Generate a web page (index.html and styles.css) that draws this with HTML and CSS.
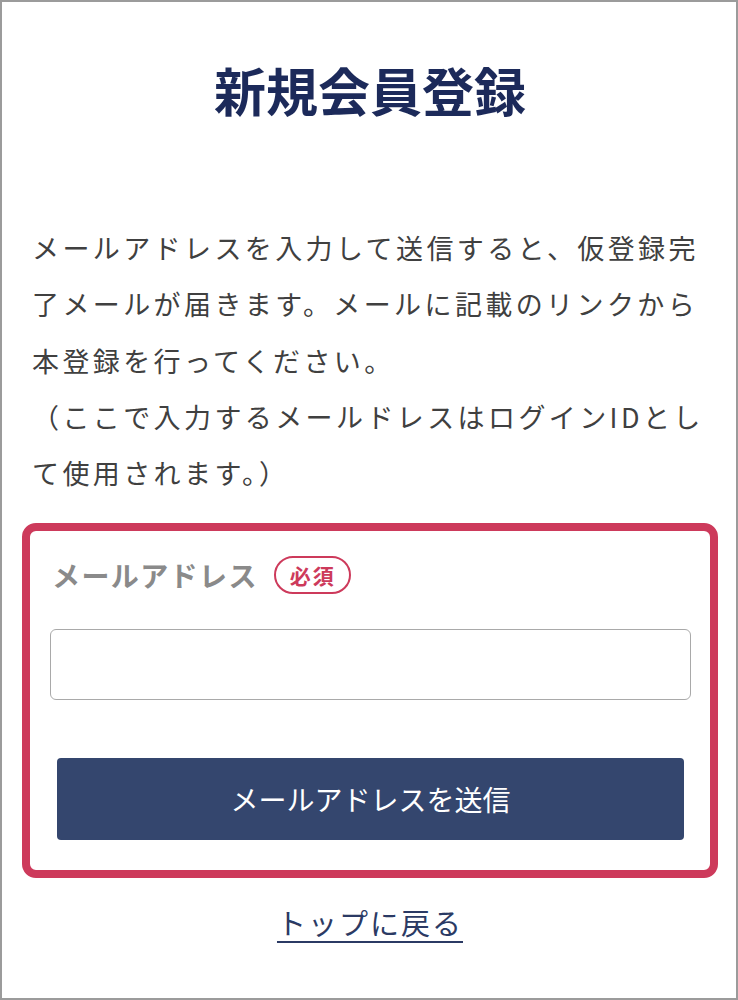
FILE: index.html
```html
<!DOCTYPE html>
<html lang="ja">
<head>
<meta charset="utf-8">
<title>新規会員登録</title>
<link rel="stylesheet" href="styles.css">
</head>
<body>
<div class="page">
  <h1 class="title">新規会員登録</h1>
  <p class="lead">メールアドレスを入力して送信すると、仮登録完了メールが届きます。メールに記載のリンクから本登録を行ってください。<br>（ここで入力するメールドレスはログインIDとして使用されます。）</p>
  <form class="box">
    <div class="label-row">
      <span class="label">メールアドレス</span>
      <span class="badge">必須</span>
    </div>
    <input class="input" type="email">
    <button class="submit" type="button">メールアドレスを送信</button>
  </form>
  <div class="back"><a href="#" class="back-link">トップに戻る</a></div>
</div>
</body>
</html>
```
FILE: styles.css
```css
html, body {
  margin: 0;
  padding: 0;
  background: #fff;
}
.page {
  box-sizing: border-box;
  width: 738px;
  height: 1000px;
  border: 2px solid #9b9b9b;
  font-family: "Noto Sans CJK JP", "Noto Sans", sans-serif;
  padding: 0 18px 0 20px;
}
.title {
  margin: 57px 0 0;
  text-align: center;
  font-size: 52px;
  line-height: 62px;
  font-weight: 700;
  color: #1c2a5a;
  letter-spacing: 0;
}
.lead {
  margin: 99px 0 0;
  padding-left: 10px;
  font-size: 27px;
  line-height: 56.3px;
  letter-spacing: 3.4px;
  color: #404040;
}
.box {
  margin: 22px 0 0;
  border: 8px solid #cd3a5b;
  border-radius: 14px;
  padding: 0 19px 30px 20px;
  display: flex;
  flex-direction: column;
}
.label-row {
  display: flex;
  align-items: center;
  gap: 16px;
  margin-top: 24px;
  padding-left: 2px;
  height: 40px;
}
.label {
  font-size: 28px;
  font-weight: 700;
  letter-spacing: 1.4px;
  color: #8a8a8a;
}
.badge {
  box-sizing: border-box;
  height: 38px;
  padding: 0 13px 0 14px;
  border: 2px solid #cd3a5b;
  border-radius: 19px;
  color: #cd3a5b;
  font-size: 21px;
  font-weight: 700;
  line-height: 34px;
  letter-spacing: 2px;
}
.input {
  display: block;
  box-sizing: border-box;
  margin: 34px 0 0;
  width: 641px;
  height: 71px;
  border: 1px solid #a9a9a9;
  border-radius: 6px;
  background: #fff;
  font-size: 24px;
}
.submit {
  display: block;
  margin: 58px 0 0 7px;
  width: 627px;
  height: 82px;
  border: 0;
  border-radius: 4px;
  background: #34466e;
  color: #fff;
  font-family: "Noto Sans CJK JP", "Noto Sans", sans-serif;
  font-size: 28px;
  font-weight: 400;
}
.back {
  text-align: center;
  margin-top: 24px;
}
.back-link {
  font-size: 29px;
  line-height: 40px;
  letter-spacing: 2px;
  color: #2b3a64;
  text-decoration: underline;
  text-underline-offset: 6px;
}
```
